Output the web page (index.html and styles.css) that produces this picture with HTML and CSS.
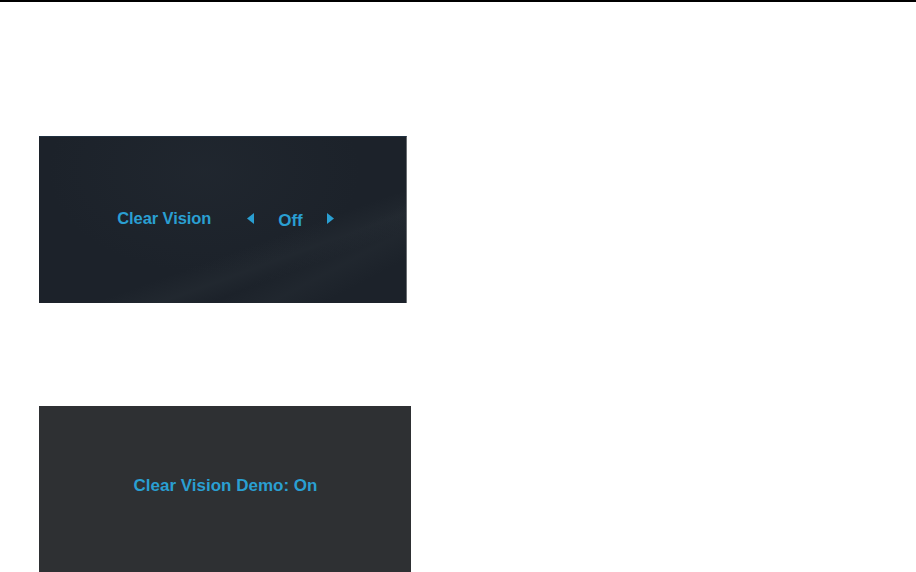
FILE: index.html
```html
<!DOCTYPE html>
<html>
  <head>
    <meta charset="utf-8" />
    <title>Clear Vision</title>
    <link rel="stylesheet" href="styles.css">
  </head>
<body>

  <hr class="rule" />

  <div class="osd osdMenu">
    <span class="label">Clear Vision</span>
    <span class="picker">
      <svg class="arrow" width="7" height="11" viewBox="0 0 7 11"><polygon points="7,0 7,11 0,5.5" /></svg>
      <span class="value">Off</span>
      <svg class="arrow" width="7" height="11" viewBox="0 0 7 11"><polygon points="0,0 0,11 7,5.5" /></svg>
    </span>
  </div>

  <div class="osd osdDemo">
    <span class="demo">Clear Vision Demo: On</span>
  </div>

</body>
</html>
```

FILE: styles.css
```css
body
{
  margin: 0px;
  padding: 0px;
  background-color: #fff;
  font-family: "Liberation Sans", Arial, sans-serif;
  font-weight: bold;
  color: #2a9fd2;
}

.rule
{
  margin: 0px;
  border: none;
  height: 2px;
  background-color: #000;
}

.osd
{
  display: flex;
  align-items: center;
  justify-content: center;
  margin-left: 39px;
  height: 167px;
  box-sizing: border-box;
}

.osdMenu
{
  width: 368px;
  margin-top: 134px;
  padding-left: 6px;
  padding-bottom: 4px;
  border-top: 1px solid #1f3040;
  border-right: 1px solid #6a6e72;
  background-color: #1c222a;
  background-image:
    linear-gradient(160deg, transparent 62%, rgba(70, 80, 85, 0.12) 70%, transparent 76%),
    linear-gradient(152deg, transparent 72%, rgba(70, 80, 85, 0.10) 80%, transparent 88%),
    radial-gradient(ellipse at 45% 20%, rgba(60, 70, 80, 0.12), transparent 55%);
}

.label
{
  font-size: 16.5px;
  letter-spacing: -0.1px;
}

.picker
{
  display: flex;
  align-items: center;
  gap: 24px;
  margin-left: 36px;
  padding-top: 1px;
}

.arrow
{
  fill: #2a9fd2;
}

.value
{
  font-size: 17px;
  padding-top: 4px;
}

.osdDemo
{
  width: 372px;
  margin-top: 103px;
  padding-bottom: 7px;
  background-color: #2e3033;
}

.demo
{
  font-size: 17px;
  padding-left: 1px;
}
```
